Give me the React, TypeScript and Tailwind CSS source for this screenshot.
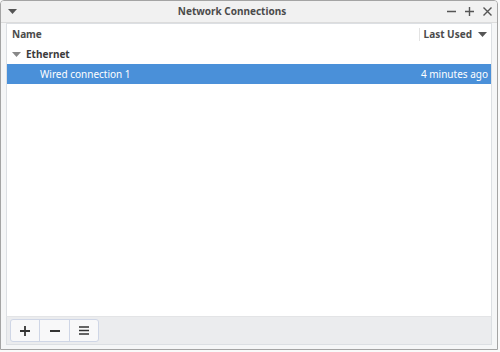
import React from 'react';

const font = { fontFamily: '"Noto Sans", "Open Sans", sans-serif' };

function Caret({ className = '' }: { className?: string }) {
  return (
    <svg width="9" height="5" viewBox="0 0 9 5" className={className}>
      <path d="M0 0h9L4.5 5z" fill="currentColor" />
    </svg>
  );
}

export default function App() {
  return (
    <div className="w-[500px] h-[352px] bg-[#fafafa] text-[10px]" style={font}>
      <div className="w-[498px] h-[350px] flex flex-col border border-[#a4a4a4] rounded-t-[4px] bg-[#f5f6f7] overflow-hidden">
        <div className="h-[22px] flex items-center border-b border-[#dcdcdc] bg-[#f1f1f1] pl-[7px] pr-[2px]">
          <Caret className="text-[#555]" />
          <div className="flex-1 text-center font-bold text-[#4b4b4b] text-[10px]">Network Connections</div>
          <div className="flex items-center gap-[9px] text-[#555] mr-[3px]">
            <svg width="9" height="9" viewBox="0 0 9 9"><path d="M0 4.5h9" stroke="currentColor" strokeWidth="1.4" /></svg>
            <svg width="9" height="9" viewBox="0 0 9 9"><path d="M0 4.5h9M4.5 0v9" stroke="currentColor" strokeWidth="1.4" /></svg>
            <svg width="9" height="9" viewBox="0 0 9 9"><path d="M0.5 0.5l8 8M8.5 0.5l-8 8" stroke="currentColor" strokeWidth="1.4" /></svg>
          </div>
        </div>
        <div className="flex-1 flex flex-col px-[5px] pb-[4px]">
          <div className="flex-1 flex flex-col bg-white border border-[#dcdfe3] border-b-0">
            <div className="h-[20px] flex items-center text-[#4b4b4b] font-bold">
              <div className="flex-1 pl-[5px]">Name</div>
              <div className="flex items-center gap-[6px] border-l border-[#e3e3e3] pl-[4px] pr-[4px] h-[13px]">
                <span>Last Used</span>
                <Caret className="text-[#555]" />
              </div>
            </div>
            <div className="h-[20px] flex items-center text-[#3b3b3b] font-bold pl-[5px]">
              <Caret className="text-[#888] mr-[5px]" />
              <span>Ethernet</span>
            </div>
            <div className="h-[20px] flex items-center bg-[#4a90d9] text-white">
              <span className="flex-1 pl-[33px]">Wired connection 1</span>
              <span className="pr-[3px]">4 minutes ago</span>
            </div>
          </div>
          <div className="h-[29px] flex items-center bg-[#ebecee] border border-[#dcdfe3] border-t-[#e3e4e6] px-[3px]">
            <div className="flex h-[23px] border border-[#cfd6e6] rounded-[3px] bg-[#f8f8f9] text-[#333] overflow-hidden">
              <div className="w-[29px] flex items-center justify-center border-r border-[#cfd6e6]">
                <svg width="10" height="10" viewBox="0 0 10 10"><path d="M0 5h10M5 0v10" stroke="currentColor" strokeWidth="1.8" /></svg>
              </div>
              <div className="w-[30px] flex items-center justify-center border-r border-[#cfd6e6]">
                <svg width="10" height="10" viewBox="0 0 10 10"><path d="M0 5h10" stroke="currentColor" strokeWidth="1.8" /></svg>
              </div>
              <div className="w-[28px] flex items-center justify-center">
                <svg width="10" height="9" viewBox="0 0 10 9"><path d="M0 1h10M0 4.5h10M0 8h10" stroke="currentColor" strokeWidth="1.6" /></svg>
              </div>
            </div>
          </div>
        </div>
      </div>
    </div>
  );
}
